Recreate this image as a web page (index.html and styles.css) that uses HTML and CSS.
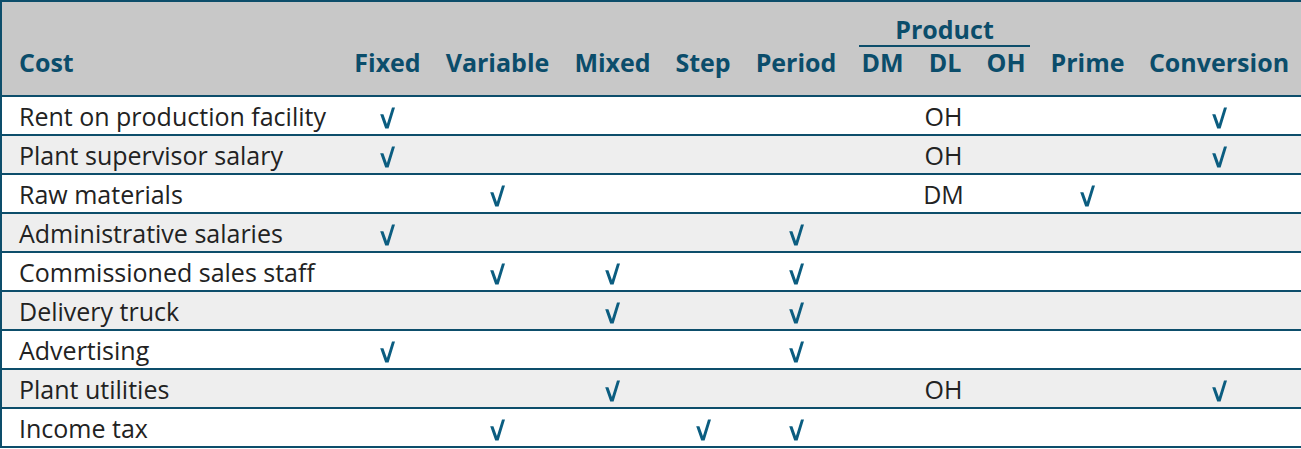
FILE: index.html
```html
<!DOCTYPE html>
<html lang="en">
<head>
<meta charset="utf-8">
<title>Cost classification</title>
<link rel="stylesheet" href="styles.css">
</head>
<body>
<table class="costs">
  <colgroup>
    <col class="c-cost"><col class="c-fixed"><col class="c-variable"><col class="c-mixed"><col class="c-step"><col class="c-period"><col class="c-dm"><col class="c-dl"><col class="c-oh"><col class="c-prime"><col class="c-conv">
  </colgroup>
  <thead>
    <tr class="h-top">
      <th class="label" rowspan="2">Cost</th>
      <th rowspan="2">Fixed</th>
      <th rowspan="2">Variable</th>
      <th rowspan="2">Mixed</th>
      <th rowspan="2">Step</th>
      <th rowspan="2">Period</th>
      <th class="group" colspan="3"><span class="group-title">Product</span></th>
      <th rowspan="2">Prime</th>
      <th rowspan="2">Conversion</th>
    </tr>
    <tr class="h-sub">
      <th>DM</th>
      <th>DL</th>
      <th>OH</th>
    </tr>
  </thead>
  <tbody>
    <tr>
      <td class="label">Rent on production facility</td>
      <td><span class="chk"></span></td><td></td><td></td><td></td><td></td>
      <td colspan="3">OH</td><td></td><td><span class="chk"></span></td>
    </tr>
    <tr>
      <td class="label">Plant supervisor salary</td>
      <td><span class="chk"></span></td><td></td><td></td><td></td><td></td>
      <td colspan="3">OH</td><td></td><td><span class="chk"></span></td>
    </tr>
    <tr>
      <td class="label">Raw materials</td>
      <td></td><td><span class="chk"></span></td><td></td><td></td><td></td>
      <td colspan="3">DM</td><td><span class="chk"></span></td><td></td>
    </tr>
    <tr>
      <td class="label">Administrative salaries</td>
      <td><span class="chk"></span></td><td></td><td></td><td></td><td><span class="chk"></span></td>
      <td colspan="3"></td><td></td><td></td>
    </tr>
    <tr>
      <td class="label">Commissioned sales staff</td>
      <td></td><td><span class="chk"></span></td><td><span class="chk"></span></td><td></td><td><span class="chk"></span></td>
      <td colspan="3"></td><td></td><td></td>
    </tr>
    <tr>
      <td class="label">Delivery truck</td>
      <td></td><td></td><td><span class="chk"></span></td><td></td><td><span class="chk"></span></td>
      <td colspan="3"></td><td></td><td></td>
    </tr>
    <tr>
      <td class="label">Advertising</td>
      <td><span class="chk"></span></td><td></td><td></td><td></td><td><span class="chk"></span></td>
      <td colspan="3"></td><td></td><td></td>
    </tr>
    <tr>
      <td class="label">Plant utilities</td>
      <td></td><td></td><td><span class="chk"></span></td><td></td><td></td>
      <td colspan="3">OH</td><td></td><td><span class="chk"></span></td>
    </tr>
    <tr>
      <td class="label">Income tax</td>
      <td></td><td><span class="chk"></span></td><td></td><td><span class="chk"></span></td><td><span class="chk"></span></td>
      <td colspan="3"></td><td></td><td></td>
    </tr>
  </tbody>
</table>
</body>
</html>
```
FILE: styles.css
```css
html, body {
  margin: 0;
  padding: 0;
  background: #ffffff;
}

.costs {
  width: 1301px;
  table-layout: fixed;
  border-collapse: collapse;
  border: 2px solid #0d4e6b;
  font-family: "Open Sans", "Noto Sans", sans-serif;
  font-size: 25px;
  line-height: 28px;
  color: #222222;
}

.c-cost { width: 341px; }
.c-fixed { width: 91px; }
.c-variable { width: 129px; }
.c-mixed { width: 101px; }
.c-step { width: 80px; }
.c-period { width: 106px; }
.c-dm { width: 67px; }
.c-dl { width: 58px; }
.c-oh { width: 64px; }
.c-prime { width: 99px; }
.c-conv { width: 165px; }

thead {
  background: #c8c8c8;
  border-bottom: 2px solid #0d4e6b;
}

thead th {
  color: #0b4d6b;
  font-weight: 700;
  text-align: center;
  vertical-align: bottom;
  padding: 0 0 19px 0;
  white-space: nowrap;
}

thead th.label {
  text-align: left;
  padding-left: 17px;
}

.h-top {
  height: 47px;
}

.h-top th.group {
  padding: 0 8px 1px 10px;
}

.group-title {
  display: block;
  line-height: 28px;
  padding-bottom: 2px;
  border-bottom: 2px solid #0d4e6b;
}

.h-sub {
  height: 47px;
}

thead tr.h-sub th {
  padding-bottom: 19px;
}

tbody tr {
  height: 39px;
  border-bottom: 2px solid #0d4e6b;
}

tbody tr:nth-child(even) {
  background: #eeeeee;
}

tbody td {
  text-align: center;
  vertical-align: middle;
  padding: 1px 0 0 0;
  white-space: nowrap;
}

tbody td.label {
  text-align: left;
  padding-left: 17px;
}

.chk {
  display: inline-block;
  width: 15px;
  height: 22px;
  vertical-align: middle;
  margin-top: -3px;
  background: no-repeat center / 15px 22px url("data:image/svg+xml,%3Csvg xmlns='http://www.w3.org/2000/svg' viewBox='0 0 15 22'%3E%3Cpath d='M0.2 7.2 L3.4 7.2 L6.9 17 L12 0.5 L15 0.5 L8.6 21.6 L5.2 21.6 Z' fill='%230b5d80'/%3E%3C/svg%3E");
}
```
